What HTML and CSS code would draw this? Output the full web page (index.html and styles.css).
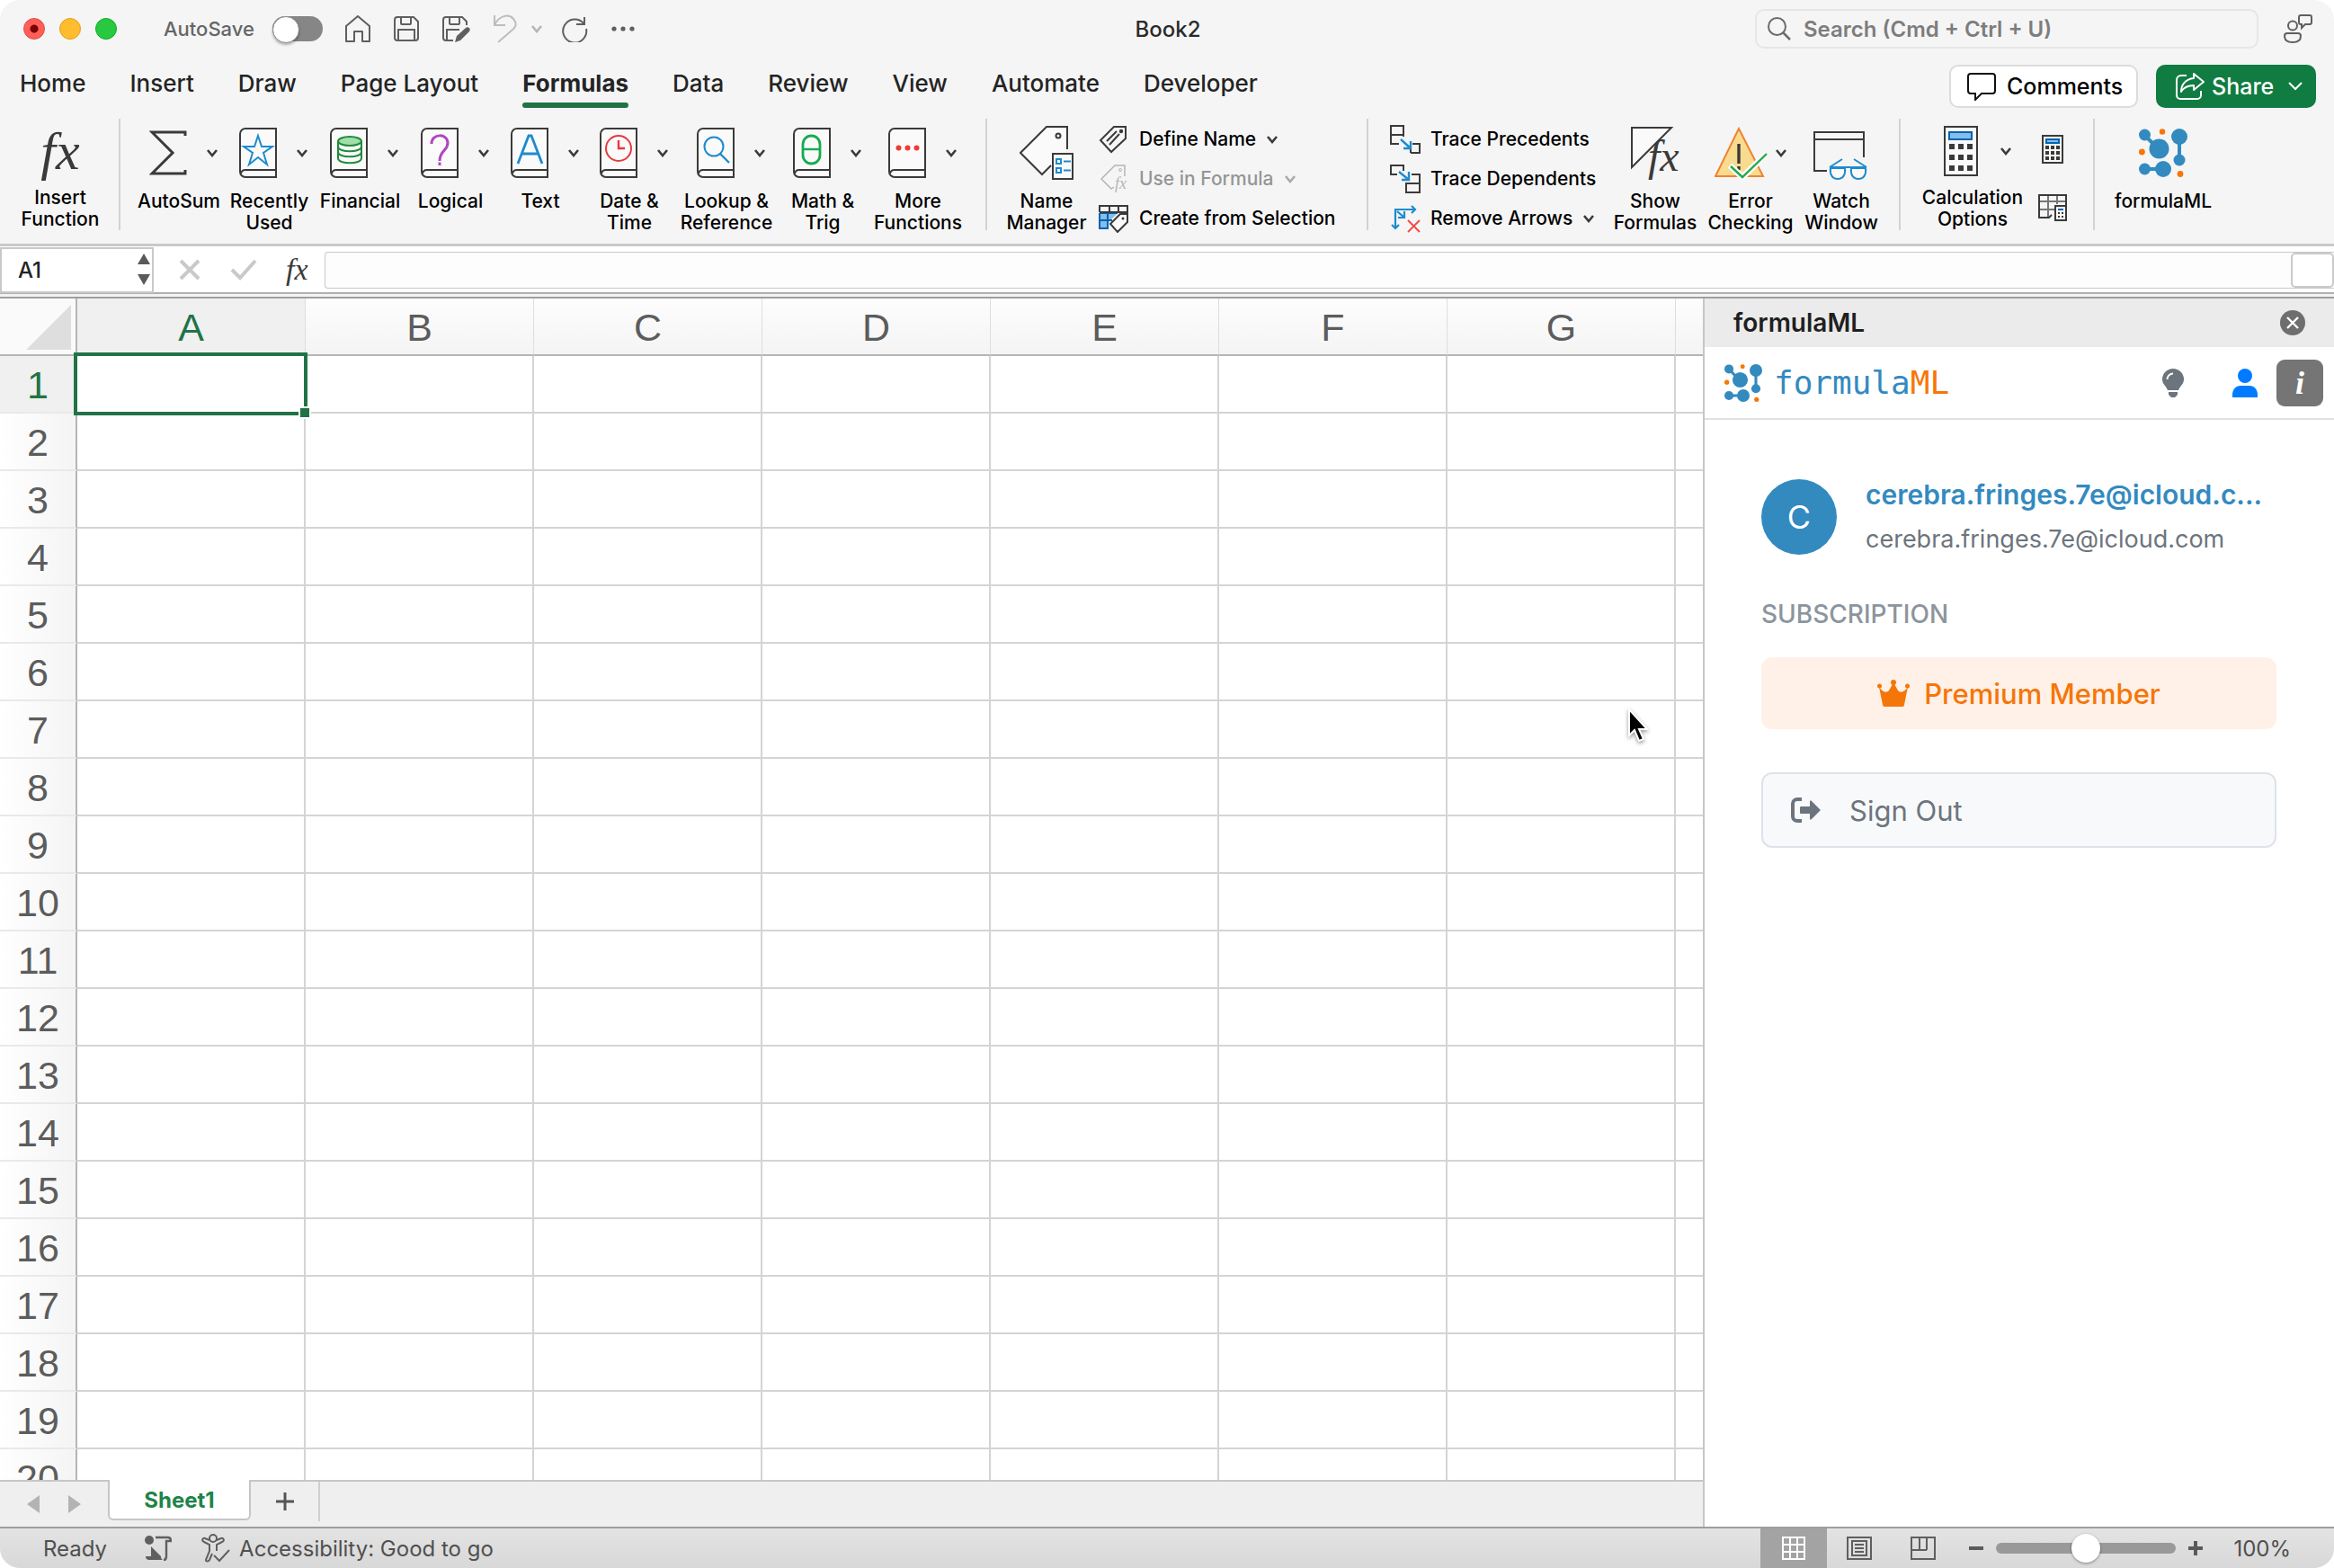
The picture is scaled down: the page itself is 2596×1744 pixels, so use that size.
FILE: index.html
```html
<!DOCTYPE html>
<html lang="en">
<head>
<meta charset="utf-8">
<title>Book2</title>
<link rel="stylesheet" href="styles.css">
</head>
<body>
<svg class="defs" aria-hidden="true">
  <symbol id="chev" viewBox="0 0 14 10"><path d="M2 2l5 6 5-6" fill="none" stroke="currentColor" stroke-width="2.6"/></symbol>
  <symbol id="book" viewBox="0 0 42 56"><path d="M41 1H7a6 6 0 0 0-6 6v42a6 6 0 0 0 6 6h34z" fill="#fafafa" stroke="#3b3a39" stroke-width="2"/><path d="M41 47H7a5 5 0 0 0-5 4" fill="none" stroke="#3b3a39" stroke-width="2"/></symbol>
  <symbol id="logo" viewBox="0 0 54 54"><g fill="#338abf" stroke="#338abf"><path d="M6 7l16 16M45 9v26M6 45h20" stroke-width="4"/><g stroke="none"><circle cx="6.500" cy="7" r="6.500"/><circle cx="22.500" cy="22.500" r="11"/><circle cx="45" cy="9" r="9"/><circle cx="45" cy="35" r="6.500"/><circle cx="6.500" cy="45" r="6.500"/><circle cx="27" cy="45" r="9"/></g></g><g fill="#f77605"><circle cx="26" cy="3.500" r="3.200"/><circle cx="3.400" cy="26" r="3.400"/><circle cx="46" cy="50.500" r="3.400"/></g></symbol>
</svg>
<div class="window">
  <header class="titlebar">
    <div class="title-left">
      <div class="lights"><button class="light light-close" aria-label="Close"></button><button class="light light-min" aria-label="Minimize"></button><button class="light light-max" aria-label="Zoom"></button></div>
      <label class="autosave">AutoSave <input type="checkbox" class="switch"></label>
      <div class="quick">
        <button aria-label="Home"><svg width="28" height="30" viewBox="0 0 28 30"><path d="M1 29V12L14 1l13 11v17h-8V18h-9v11z" fill="none" stroke="#5f5f5f" stroke-width="2" stroke-linejoin="round"/></svg></button>
        <button aria-label="Save"><svg width="28" height="28" viewBox="0 0 28 28"><path d="M4 1h18l5 5v18a3 3 0 0 1-3 3H4a3 3 0 0 1-3-3V4a3 3 0 0 1 3-3zM8 1v7a1 1 0 0 0 1 1h9a1 1 0 0 0 1-1V1M5 27V15h18v12" fill="none" stroke="#5f5f5f" stroke-width="2"/></svg></button>
        <button aria-label="Save As"><svg width="32" height="32" viewBox="0 0 32 32"><path d="M12 29H4a3 3 0 0 1-3-3V6a3 3 0 0 1 3-3h18l5 5v4M8 3v7a1 1 0 0 0 1 1h9a1 1 0 0 0 1-1V3M5 29V17h14" fill="none" stroke="#5f5f5f" stroke-width="2"/><path d="M14 31l2-7 10-9c3-2 6 1 4 4l-10 10z" fill="#5f5f5f"/></svg></button>
        <button class="undo" aria-label="Undo"><svg width="28" height="32" viewBox="0 0 28 32"><path d="M2 1v11h12M2 12C7 1 18-1 23 5s2 10-2 13L6 31" fill="none" stroke="#bdbdbd" stroke-width="2"/></svg><svg class="chev" width="14" height="10"><use href="#chev"/></svg></button>
        <button aria-label="Redo"><svg width="30" height="30" viewBox="0 0 30 30"><path d="M26 2v8h-9M25.500 9.500A13 13 0 1 0 28 15" fill="none" stroke="#5f5f5f" stroke-width="2"/></svg></button>
        <button aria-label="More"><svg width="26" height="6" viewBox="0 0 26 6" fill="#5f5f5f"><circle cx="3" cy="3" r="2.600"/><circle cx="13" cy="3" r="2.600"/><circle cx="23" cy="3" r="2.600"/></svg></button>
      </div>
    </div>
    <h1 class="doc">Book2</h1>
    <div class="title-right">
      <label class="search"><svg width="26" height="26" viewBox="0 0 26 26"><circle cx="10.500" cy="10.500" r="9.500" fill="none" stroke="#6b6b6b" stroke-width="2"/><path d="M17 17l8 8" stroke="#6b6b6b" stroke-width="2.500"/></svg><input type="text" aria-label="Search" placeholder="Search (Cmd + Ctrl + U)"></label>
      <button aria-label="Presence"><svg width="32" height="32" viewBox="0 0 32 32" fill="none" stroke="#5f5f5f" stroke-width="2"><circle cx="10" cy="12.500" r="5"/><path d="M4 21h12a3 3 0 0 1 3 3c0 5-4 7-9 7s-9-2-9-7a3 3 0 0 1 3-3zM19 1h10a2 2 0 0 1 2 2v6a2 2 0 0 1-2 2h-5l-4 4v-4h-1a2 2 0 0 1-2-2V3a2 2 0 0 1 2-2z"/></svg></button>
    </div>
  </header>
  <div class="tabrow">
    <nav class="tabs">
      <a href="#">Home</a><a href="#">Insert</a><a href="#">Draw</a><a href="#">Page Layout</a><a href="#" class="on">Formulas</a><a href="#">Data</a><a href="#">Review</a><a href="#">View</a><a href="#">Automate</a><a href="#">Developer</a>
    </nav>
    <div class="actions">
      <button class="comments"><svg width="32" height="32" viewBox="0 0 32 32"><path d="M4 2h24a3 3 0 0 1 3 3v16a3 3 0 0 1-3 3H16l-7 7v-7H4a3 3 0 0 1-3-3V5a3 3 0 0 1 3-3z" fill="none" stroke="#111" stroke-width="2"/></svg>Comments</button>
      <button class="share"><svg width="32" height="32" viewBox="0 0 32 32" fill="none" stroke="#fff" stroke-width="2"><path d="M12 4H6a5 5 0 0 0-5 5v17a4 4 0 0 0 4 4h19a4 4 0 0 0 4-4v-5"/><path d="M20 2l11 9-11 9v-5C13 15 9 17 6 22c0-8 5-14 14-15z" stroke-linejoin="round"/></svg>Share<svg class="sharechev" width="16" height="10" viewBox="0 0 16 10"><path d="M1 1l7 7 7-7" fill="none" stroke="#fff" stroke-width="2"/></svg></button>
    </div>
  </div>
  <div class="ribbon">
    <section class="group g-insert">
      <button class="big"><span class="pic"><span class="fx">fx</span></span><span>Insert<br>Function</span></button>
    </section>
    <section class="group g-lib">
      <button class="big drop"><span class="pic"><svg width="42" height="50" viewBox="0 0 42 50"><path d="M40 6V2H3l23 23L3 48h37v-4" fill="none" stroke="#3b3a39" stroke-width="3"/></svg><svg class="chev" width="14" height="10"><use href="#chev"/></svg></span><span>AutoSum</span></button>
      <button class="big drop"><span class="pic"><svg width="42" height="56"><use href="#book"/><path d="M21 9l4 12h12l-10 7 4 13-10-8-10 8 4-13L5 21h12z" fill="#fafafa" stroke="#1e8bcd" stroke-width="2"/></svg><svg class="chev" width="14" height="10"><use href="#chev"/></svg></span><span>Recently<br>Used</span></button>
      <button class="big drop"><span class="pic"><svg width="42" height="56"><use href="#book"/><g fill="#fafafa" stroke="#218a3c" stroke-width="2"><path d="M9 15v19c0 7 26 7 26 0V15"/><path d="M9 27c0 7 26 7 26 0M9 21c0 7 26 7 26 0" fill="none"/><ellipse cx="22" cy="15" rx="13" ry="5" fill="#a1dfaa"/></g></svg><svg class="chev" width="14" height="10"><use href="#chev"/></svg></span><span>Financial</span></button>
      <button class="big drop"><span class="pic"><svg width="42" height="56"><use href="#book"/><path d="M12 18c0-12 18-12 18-1 0 9-9 8-9 20M21 38.500v3.500" fill="none" stroke="#b146c2" stroke-width="3"/></svg><svg class="chev" width="14" height="10"><use href="#chev"/></svg></span><span>Logical</span></button>
      <button class="big drop"><span class="pic"><svg width="42" height="56"><use href="#book"/><path d="M8 40L20 9h3l12 31M12.500 29h18" fill="none" stroke="#1e8bcd" stroke-width="2.800"/></svg><svg class="chev" width="14" height="10"><use href="#chev"/></svg></span><span>Text</span></button>
      <button class="big drop"><span class="pic"><svg width="42" height="56"><use href="#book"/><circle cx="21" cy="23" r="14" fill="none" stroke="#e8393d" stroke-width="2"/><path d="M21 14v9h7" fill="none" stroke="#e8393d" stroke-width="2.400"/></svg><svg class="chev" width="14" height="10"><use href="#chev"/></svg></span><span>Date &amp;<br>Time</span></button>
      <button class="big drop"><span class="pic"><svg width="42" height="56"><use href="#book"/><circle cx="19" cy="21" r="10.500" fill="none" stroke="#1e8bcd" stroke-width="2"/><path d="M26 29l10 10" stroke="#1e8bcd" stroke-width="2.400"/></svg><svg class="chev" width="14" height="10"><use href="#chev"/></svg></span><span>Lookup &amp;<br>Reference</span></button>
      <button class="big drop"><span class="pic"><svg width="42" height="56"><use href="#book"/><rect x="11" y="9" width="19" height="31" rx="9.500" fill="none" stroke="#17ab50" stroke-width="2.800"/><path d="M11 24h19" stroke="#17ab50" stroke-width="2.400"/></svg><svg class="chev" width="14" height="10"><use href="#chev"/></svg></span><span>Math &amp;<br>Trig</span></button>
      <button class="big drop"><span class="pic"><svg width="42" height="56"><use href="#book"/><g fill="#f03a37"><circle cx="11.500" cy="22.500" r="3"/><circle cx="21.500" cy="22.500" r="3"/><circle cx="31.500" cy="22.500" r="3"/></g></svg><svg class="chev" width="14" height="10"><use href="#chev"/></svg></span><span>More<br>Functions</span></button>
    </section>
    <section class="group g-names">
      <button class="big"><span class="pic"><svg width="60" height="60" viewBox="0 0 60 60"><path d="M53 26V1H30L1 30l24 24 10-10" fill="#fafafa" stroke="#3b3a39" stroke-width="2"/><circle cx="43" cy="11" r="2.500" fill="none" stroke="#3b3a39" stroke-width="2"/><path d="M37 31h22v28H37z" fill="#fafafa" stroke="#3b3a39" stroke-width="2"/><path d="M41 37h5v5h-5zM41 47h5v5h-5zM49 39.500h8M49 49.500h8" fill="none" stroke="#1e8bcd" stroke-width="2"/></svg></span><span>Name<br>Manager</span></button>
      <div class="stack">
        <button class="cmd"><svg width="34" height="32" viewBox="0 0 34 32"><path d="M30 2H17L2 17l12 13L30 15zM9 18L20 7M12 22L23 10" fill="none" stroke="#3b3a39" stroke-width="2"/><circle cx="25" cy="7" r="2.200" fill="#3b3a39"/></svg>Define Name<svg class="chev" width="14" height="10"><use href="#chev"/></svg></button>
        <button class="cmd dim" disabled><svg width="34" height="32" viewBox="0 0 34 32"><path d="M29 13V1H18L3 16l11 11 3-2" fill="none" stroke="#b5b5b5" stroke-width="1.500"/><circle cx="24" cy="6" r="1.500" fill="none" stroke="#b5b5b5"/><text x="18" y="27" class="minifx">fx</text></svg>Use in Formula<svg class="chev" width="14" height="10"><use href="#chev"/></svg></button>
        <button class="cmd"><svg width="34" height="32" viewBox="0 0 34 32"><path d="M1 10h20L10 21v7H1z" fill="#83beec"/><path d="M1 10v17h10M1 18h14M10 10v16M1 10h20" fill="none" stroke="#0063b1" stroke-width="2"/><path d="M1 9V2h31v8M12 2v7M22 2v7M1 9h31" fill="none" stroke="#3b3a39" stroke-width="2"/><path d="M32 11h-8L13 22l8 9 11-11z" fill="#fafafa" stroke="#3b3a39" stroke-width="2"/><circle cx="27" cy="16" r="1.500" fill="#3b3a39"/></svg>Create from Selection</button>
      </div>
    </section>
    <section class="group g-audit">
      <div class="stack">
        <button class="cmd"><svg width="34" height="32" viewBox="0 0 34 32"><path d="M10 21H1V1h14v12M1 11h14M23 31h10V21h-8M23 27v4" fill="none" stroke="#3b3a39" stroke-width="2"/><path d="M12 16l11 10M23 18v8h-8" fill="none" stroke="#1e8bcd" stroke-width="2.400"/></svg>Trace Precedents</button>
        <button class="cmd"><svg width="34" height="32" viewBox="0 0 34 32"><path d="M8 11H1V1h14v6M18 21h15v10H18zM24 11h9v10" fill="none" stroke="#3b3a39" stroke-width="2"/><path d="M10 8l11 9M21 8v9h-8" fill="none" stroke="#1e8bcd" stroke-width="2.400"/></svg>Trace Dependents</button>
        <button class="cmd"><svg width="34" height="32" viewBox="0 0 34 32"><path d="M6 27V6h22M24 2l4 4-4 4M2 23l4 4 4-4M8 8l8 7M16 8v7h-7" fill="none" stroke="#1e8bcd" stroke-width="2.200"/><path d="M20 18l13 13M33 18L20 31" stroke="#f04b4b" stroke-width="2"/></svg>Remove Arrows<svg class="chev" width="14" height="10"><use href="#chev"/></svg></button>
      </div>
      <button class="big w-show"><span class="pic"><svg width="56" height="60" viewBox="0 0 56 60"><path d="M46 2H2v44z" fill="#fafafa" stroke="#3b3a39" stroke-width="2"/><text x="20" y="50" class="showfx">fx</text></svg></span><span>Show<br>Formulas</span></button>
      <button class="big w-err"><span class="pic"><svg width="60" height="60" viewBox="0 0 60 60"><path d="M27 3l27 53H1z" fill="#f8db8f" stroke="#ee8432" stroke-width="2"/><path d="M27 20v22M27 45v4" stroke="#3b3a39" stroke-width="3.400"/><path d="M17 44l14 13 27-26" fill="none" stroke="#fafafa" stroke-width="7"/><path d="M18 45l13 12 27-26" fill="none" stroke="#22a94f" stroke-width="2.400"/></svg><svg class="chev" width="14" height="10"><use href="#chev"/></svg></span><span>Error<br>Checking</span></button>
      <button class="big w-watch"><span class="pic"><svg width="62" height="60" viewBox="0 0 62 60"><path d="M15 50H1V7h55v28M1 15h55" fill="none" stroke="#3b3a39" stroke-width="2"/><path d="M18 46h41M18 46l14-9M59 46l-14-9" fill="none" stroke="#1e8bcd" stroke-width="2"/><path d="M19 47h16c1 7-2 12-8 12s-9-5-8-12zM42 47h16c1 7-2 12-8 12s-9-5-8-12z" fill="#fafafa" stroke="#1e8bcd" stroke-width="2"/></svg></span><span>Watch<br>Window</span></button>
    </section>
    <section class="group g-calc">
      <button class="big"><span class="pic"><svg width="38" height="56" viewBox="0 0 38 56"><path d="M1 1h36v54H1z" fill="#fafafa" stroke="#3b3a39" stroke-width="2"/><path d="M6 7h25v8H6z" fill="#83beec" stroke="#0063b1" stroke-width="2"/><path d="M6 23h26M6 35h26M6 47h26" stroke="#3b3a39" stroke-width="6" stroke-dasharray="6 4"/></svg><svg class="chev" width="14" height="10"><use href="#chev"/></svg></span><span>Calculation<br>Options</span></button>
      <div class="minis">
        <button aria-label="Calculate Now"><svg width="24" height="32" viewBox="0 0 24 32"><path d="M1 1h22v30H1z" fill="#fafafa" stroke="#3b3a39" stroke-width="2"/><path d="M5 5h14v4H5z" fill="#83beec" stroke="#0063b1" stroke-width="2"/><path d="M4 14h16M4 20h16M4 26h16" stroke="#3b3a39" stroke-width="4" stroke-dasharray="4 2"/></svg></button>
        <button aria-label="Calculate Sheet"><svg width="32" height="30" viewBox="0 0 32 30"><path d="M1 8h30M1 17h17M11 1v25M21 1v10" fill="none" stroke="#777" stroke-width="2"/><path d="M31 12V1H1v25h11l3-3" fill="none" stroke="#3b3a39" stroke-width="2"/><path d="M19 13h12v16H19z" fill="#fafafa" stroke="#3b3a39" stroke-width="2"/><path d="M22 17h6" stroke="#0063b1" stroke-width="2"/><path d="M22 21h6M22 25h6" stroke="#3b3a39" stroke-width="2" stroke-dasharray="2 2"/></svg></button>
      </div>
    </section>
    <section class="group g-addin">
      <button class="big"><span class="pic"><svg width="54" height="54"><use href="#logo"/></svg></span><span>formulaML</span></button>
    </section>
  </div>
  <div class="fbar">
    <div class="namebox"><input type="text" aria-label="Name box" value="A1"><svg width="16" height="36" viewBox="0 0 16 36" fill="#5a5a5a"><path d="M8 0l7 12H1zM8 35L1 23h14z"/></svg></div>
    <div class="fbtns">
      <button aria-label="Cancel"><svg width="26" height="24" viewBox="0 0 26 24"><path d="M3 2l20 20M23 2L3 22" stroke="#c9c9c9" stroke-width="4"/></svg></button>
      <button aria-label="Enter"><svg width="30" height="24" viewBox="0 0 30 24"><path d="M2 12l9 9L28 2" fill="none" stroke="#c9c9c9" stroke-width="4"/></svg></button>
      <button class="fxs">fx</button>
    </div>
    <div class="finput"><input type="text" aria-label="Formula"><button aria-label="Expand formula bar"></button></div>
  </div>
  <main class="body">
    <div class="sheet">
      <div class="cells">
        <table>
          <colgroup><col class="c-num"><col class="c"><col class="c"><col class="c"><col class="c"><col class="c"><col class="c"><col class="c"><col></colgroup>
          <thead><tr><th class="corner"><svg width="52" height="52" viewBox="0 0 52 52"><path d="M51 1v50H1z" fill="#dedede"/></svg></th><th class="on">A</th><th>B</th><th>C</th><th>D</th><th>E</th><th>F</th><th>G</th><th></th></tr></thead>
          <tbody>
            <tr><th class="on">1</th><td class="picked"><div class="sel"></div></td><td></td><td></td><td></td><td></td><td></td><td></td><td></td></tr>
            <tr><th>2</th><td></td><td></td><td></td><td></td><td></td><td></td><td></td><td></td></tr>
            <tr><th>3</th><td></td><td></td><td></td><td></td><td></td><td></td><td></td><td></td></tr>
            <tr><th>4</th><td></td><td></td><td></td><td></td><td></td><td></td><td></td><td></td></tr>
            <tr><th>5</th><td></td><td></td><td></td><td></td><td></td><td></td><td></td><td></td></tr>
            <tr><th>6</th><td></td><td></td><td></td><td></td><td></td><td></td><td></td><td></td></tr>
            <tr><th>7</th><td></td><td></td><td></td><td></td><td></td><td></td><td></td><td></td></tr>
            <tr><th>8</th><td></td><td></td><td></td><td></td><td></td><td></td><td></td><td></td></tr>
            <tr><th>9</th><td></td><td></td><td></td><td></td><td></td><td></td><td></td><td></td></tr>
            <tr><th>10</th><td></td><td></td><td></td><td></td><td></td><td></td><td></td><td></td></tr>
            <tr><th>11</th><td></td><td></td><td></td><td></td><td></td><td></td><td></td><td></td></tr>
            <tr><th>12</th><td></td><td></td><td></td><td></td><td></td><td></td><td></td><td></td></tr>
            <tr><th>13</th><td></td><td></td><td></td><td></td><td></td><td></td><td></td><td></td></tr>
            <tr><th>14</th><td></td><td></td><td></td><td></td><td></td><td></td><td></td><td></td></tr>
            <tr><th>15</th><td></td><td></td><td></td><td></td><td></td><td></td><td></td><td></td></tr>
            <tr><th>16</th><td></td><td></td><td></td><td></td><td></td><td></td><td></td><td></td></tr>
            <tr><th>17</th><td></td><td></td><td></td><td></td><td></td><td></td><td></td><td></td></tr>
            <tr><th>18</th><td></td><td></td><td></td><td></td><td></td><td></td><td></td><td></td></tr>
            <tr><th>19</th><td></td><td></td><td></td><td></td><td></td><td></td><td></td><td></td></tr>
            <tr><th>20</th><td></td><td></td><td></td><td></td><td></td><td></td><td></td><td></td></tr>
          </tbody>
        </table>
      </div>
      <div class="sheettabs">
        <div class="arrows"><button aria-label="Previous sheet"><svg width="16" height="22" viewBox="0 0 16 22"><path d="M15 1v20L1 11z" fill="#b3b3b3"/></svg></button><button aria-label="Next sheet"><svg width="16" height="22" viewBox="0 0 16 22"><path d="M1 1v20l14-10z" fill="#b3b3b3"/></svg></button></div>
        <button class="sheettab">Sheet1</button>
        <button class="addsheet" aria-label="Add sheet"><svg width="22" height="22" viewBox="0 0 22 22"><path d="M11 1v20M1 11h20" stroke="#555" stroke-width="3"/></svg></button>
      </div>
    </div>
    <aside class="pane">
      <div class="panehead"><h2>formulaML</h2><button aria-label="Close pane"><svg width="30" height="30" viewBox="0 0 30 30"><circle cx="15" cy="15" r="14" fill="#6e6e6e"/><path d="M9 9l12 12M21 9L9 21" stroke="#fff" stroke-width="2.400"/></svg></button></div>
      <div class="brand">
        <svg width="42" height="42"><use href="#logo"/></svg><span class="word">formula<b>ML</b></span>
        <div class="brandbtns">
          <button aria-label="Tips"><svg width="24" height="32" viewBox="0 0 24 32"><path d="M12 0a12 12 0 0 1 12 12c0 5-4 7-6 12H6C4 19 0 17 0 12A12 12 0 0 1 12 0zM7 26h10v3l-3 3h-4l-3-3z" fill="#6c757d"/><path d="M5.500 12A6.500 6.500 0 0 1 12 5.500" fill="none" stroke="#fff" stroke-width="2"/></svg></button>
          <button aria-label="Account"><svg width="28" height="32" viewBox="0 0 28 32" fill="#007bff"><circle cx="14" cy="8" r="8"/><path d="M0 32v-3c0-6 4-10 9-10h10c5 0 9 4 9 10v3z"/></svg></button>
          <button class="info" aria-label="Info">i</button>
        </div>
      </div>
      <div class="panebody">
        <div class="user"><span class="avatar">C</span><div class="who"><strong>cerebra.fringes.7e@icloud.c...</strong><span>cerebra.fringes.7e@icloud.com</span></div></div>
        <h3>SUBSCRIPTION</h3>
        <div class="premium"><svg width="36" height="30" viewBox="0 0 36 30" fill="#f57608"><path d="M6 28L2 8c4 6 8 7 11 4l5-9 5 9c3 3 7 2 11-4l-4 20c0 1-1 2-2 2H8c-1 0-2-1-2-2z"/><circle cx="18" cy="3" r="3"/><circle cx="2.500" cy="7" r="2.500"/><circle cx="33.500" cy="7" r="2.500"/></svg>Premium Member</div>
        <button class="signout"><svg width="34" height="28" viewBox="0 0 34 28"><path d="M12 2H7a5 5 0 0 0-5 5v14a5 5 0 0 0 5 5h5" fill="none" stroke="#6c757d" stroke-width="4"/><path d="M11 10h10V5c0-2 1-2 2-1l9 9c1 1 1 1 0 2l-9 9c-1 1-2 1-2-1v-5H11c-1 0-1-1-1-1v-6c0-1 1-1 1-1z" fill="#6c757d"/></svg>Sign Out</button>
      </div>
    </aside>
  </main>
  <footer class="status">
    <span class="ready">Ready</span>
    <button class="macro" aria-label="Record macro"><svg width="30" height="28" viewBox="0 0 30 28"><circle cx="5" cy="5" r="5" fill="#5f5f5f"/><path d="M12 2h14c2 0 3 2 3 4h-5v17c0 2-1 4-3 4" fill="none" stroke="#5f5f5f" stroke-width="2.400"/><path d="M7 12v11H1c0 3 2 4 4 4h15c-2-1-2-3-2-4z" fill="#5f5f5f"/></svg></button>
    <button class="access"><svg width="32" height="32" viewBox="0 0 32 32" fill="none" stroke="#5f5f5f" stroke-width="2"><circle cx="13" cy="5" r="4"/><path d="M9 7L4 5c-3-1-4 3-1 4l6 3v7L5 29c0 2 3 2 4 0l3-7M17 7l5-2c3-1 4 3 1 4l-6 3v7M14 24l6 6 11-12"/></svg>Accessibility: Good to go</button>
    <div class="views">
      <button class="on" aria-label="Normal view"><svg width="26" height="26" viewBox="0 0 26 26"><path d="M1 1h24v24H1zM1 9h24M1 17h24M9 1v24M17 1v24" fill="none" stroke="#fff" stroke-width="2"/></svg></button>
      <button aria-label="Page layout view"><svg width="28" height="26" viewBox="0 0 28 26"><path d="M1 1h26v24H1zM6 5h16v16H6zM9 9h10M9 13h10M9 17h10" fill="none" stroke="#5f5f5f" stroke-width="2"/></svg></button>
      <button aria-label="Page break view"><svg width="28" height="26" viewBox="0 0 28 26"><path d="M1 1h26v24H1zM1 15h17M10 1v14M18 1v14" fill="none" stroke="#5f5f5f" stroke-width="2"/></svg></button>
    </div>
    <div class="zoom">
      <button aria-label="Zoom out"><svg width="16" height="16" viewBox="0 0 16 16"><path d="M0 8h16" stroke="#5a5a5a" stroke-width="4"/></svg></button>
      <input type="range" min="0" max="200" value="100" aria-label="Zoom">
      <button aria-label="Zoom in"><svg width="16" height="16" viewBox="0 0 16 16"><path d="M0 8h16M8 0v16" stroke="#5a5a5a" stroke-width="4"/></svg></button>
      <span class="pct">100%</span>
    </div>
  </footer>
  <svg class="cursor" width="24" height="40" viewBox="0 0 24 40"><path d="M2 2v29l6-6 5 12 5-2-5-11h9z" fill="#000" stroke="#fff" stroke-width="2"/></svg>
</div>
</body>
</html>
```
FILE: styles.css
```css
* { box-sizing: border-box; }
html, body { height: 100%; margin: 0; }
body { background: #fff; font-family: Inter, "Liberation Sans", sans-serif; color: #242424; overflow: hidden; }
button, input { font: inherit; color: inherit; border: 0; background: none; padding: 0; margin: 0; outline: 0; }
h1, h2, h3 { margin: 0; }
svg { display: block; flex: none; }
a { color: inherit; text-decoration: none; }
.defs { position: absolute; width: 0; height: 0; }
.window { position: relative; height: 100%; display: flex; flex-direction: column; background: #f5f5f5; border-radius: 22px; overflow: hidden; }
.chev { color: #3b3a39; }

/* title bar */
.titlebar { display: grid; grid-template-columns: 1fr auto 1fr; align-items: center; height: 64px; padding: 0 24px 0 26px; }
.title-left { display: flex; align-items: center; }
.lights { display: flex; gap: 16px; margin-right: 52px; }
.light { width: 24px; height: 24px; border-radius: 50%; }
.light-close { background: radial-gradient(circle, #7a0000 4px, #ff5f57 5px); border: 1px solid #e2463f; }
.light-min { background: #febc2e; border: 1px solid #e1a116; }
.light-max { background: #28c840; border: 1px solid #12ac28; }
.autosave { display: flex; align-items: center; gap: 20px; font-size: 22px; font-weight: 500; color: #666; }
.switch { appearance: none; width: 56px; height: 28px; border-radius: 14px; background: #868686; display: flex; }
.switch::before { content: ""; width: 28px; height: 28px; border-radius: 50%; background: #fff; border: 1px solid #8a8a8a; box-shadow: 0 2px 3px rgba(0,0,0,.3); }
.quick { display: flex; align-items: center; gap: 26px; margin-left: 25px; }
.undo { display: flex; align-items: center; gap: 14px; margin-right: -6px; margin-left: -2px; }
.undo .chev { color: #b5b5b5; }
.doc { font-size: 24px; font-weight: 500; color: #2b2b2b; }
.title-right { display: flex; align-items: center; justify-content: flex-end; gap: 28px; }
.search { display: flex; align-items: center; gap: 14px; width: 560px; height: 44px; padding: 0 12px; border: 2px solid #e6e6e6; border-radius: 10px; }
.search input { flex: 1; font-size: 24px; font-weight: 600; }
.search input::placeholder { color: #7d7d7d; opacity: 1; }

/* ribbon tabs */
.tabrow { display: flex; justify-content: space-between; align-items: center; height: 64px; padding: 0 20px 0 22px; }
.tabs { display: flex; gap: 49px; font-size: 26px; font-weight: 500; line-height: 30px; padding-top: 6px; }
.tabs a { border-bottom: 6px solid transparent; padding-bottom: 6px; position: relative; }
.tabs .on { font-weight: 700; }
.tabs .on::after { content: ""; position: absolute; left: 0; right: 0; bottom: -6px; height: 6px; border-radius: 3px; background: #217346; }
.actions { display: flex; gap: 20px; font-size: 25px; font-weight: 500; }
.comments, .share { display: flex; align-items: center; height: 48px; border-radius: 10px; }
.comments { width: 210px; gap: 12px; padding-left: 18px; background: #fff; border: 2px solid #dcdcdc; color: #000; }
.share { width: 178px; gap: 8px; padding-left: 22px; background: #107c41; color: #fff; }
.sharechev { margin-left: 8px; }

/* ribbon */
.ribbon { display: flex; height: 146px; padding: 4px 0 16px; border-bottom: 3px solid #c9c9c9; color: #000; font-size: 21px; line-height: 24px; }
.group { display: flex; height: 124px; border-right: 2px solid #d2d2d2; }
.group:last-child { border: 0; }
.big { display: flex; flex-direction: column; align-items: center; justify-content: flex-start; font-weight: 500; white-space: nowrap; }
.pic { display: flex; align-items: center; justify-content: center; height: 60px; margin: 8px 0 12px; }
.big .chev { margin-left: 21px; }
.drop .pic { width: 67px; justify-content: flex-start; }
.fx { font: italic 60px/56px "Liberation Serif", serif; color: #3b3a39; }
.g-insert { width: 134px; justify-content: center; padding-left: 2px; }
.g-lib { width: 964px; padding-left: 15px; display: grid; grid-template-columns: 100px 101px 101px 100px 100px 98px 118px 96px 116px; }
.g-names { width: 424px; padding-left: 18px; }
.g-names .big { width: 96px; }
.stack { display: grid; grid-template-rows: repeat(3, 44px); justify-items: start; padding: 1px 0 0 10px; }
.cmd { display: flex; align-items: center; gap: 11px; font-weight: 500; white-space: nowrap; }
.dim { color: #959595; }
.dim .chev { color: #a9a9a9; }
.minifx { font: italic 18px "Liberation Serif", serif; fill: #b5b5b5; }
.showfx { font: italic 48px "Liberation Serif", serif; fill: #3b3a39; }
.g-audit { width: 592px; padding-left: 14px; }
.g-audit .stack { width: 252px; }
.w-show { width: 106px; }
.w-err { width: 106px; }
.w-err .pic { width: 80px; justify-content: flex-start; }
.w-err .big .chev, .w-err .chev { margin-left: 7px; }
.w-watch { width: 96px; }
.g-calc { width: 216px; padding-left: 22px; }
.g-calc .big { width: 116px; }
.g-calc .big .chev { margin-left: 24px; margin-right: -12px; }
.minis { display: flex; flex-direction: column; align-items: center; width: 62px; padding-top: 18px; gap: 34px; }
.g-addin { width: 152px; justify-content: center; }

/* formula bar */
.fbar { display: flex; align-items: center; height: 58px; background: #fff; border-bottom: 2px solid #9e9e9e; box-shadow: inset 0 -3px #f3f3f3, inset 0 -5px #b0b0b0; padding-bottom: 4px; }
.namebox { display: flex; align-items: center; width: 171px; height: 51px; border: 2px solid #c9c9c9; padding: 0 1px 0 18px; }
.namebox input { flex: 1; min-width: 0; font-size: 24px; font-weight: 500; }
.fbtns { display: flex; align-items: center; gap: 32px; width: 190px; padding-left: 27px; }
.fxs { font: italic 34px/40px "Liberation Serif", serif; color: #3b3a39; }
.finput { flex: 1; display: flex; height: 41px; border: 1px solid #c9c9c9; border-right: 0; border-radius: 4px 0 0 4px; background: #fdfdfd; }
.finput input { flex: 1; }
.finput button { width: 48px; border: 2px solid #cacaca; border-radius: 5px; background: #fff; }

/* workbook */
.body { flex: 1; min-height: 0; display: flex; background: #fff; }
.sheet { flex: 1; min-width: 0; display: flex; flex-direction: column; }
.cells { flex: 1; min-height: 0; overflow: hidden; }
table { width: 100%; table-layout: fixed; border-collapse: separate; border-spacing: 0; }
.c-num { width: 86px; }
.c { width: 254px; }
th { padding: 2px 0 0; font: 400 43px/60px "Liberation Sans", sans-serif; color: #5c5c5c; }
thead th { height: 64px; background: linear-gradient(#fdfdfd, #f4f4f4); border-right: 1px solid #dedede; border-bottom: 2px solid #b5b5b5; }
tbody th { height: 64px; background: linear-gradient(90deg, #fff, #f4f4f4); border-right: 2px solid #b5b5b5; border-bottom: 2px solid #e9e9e9; }
thead .corner { border-right: 2px solid #b5b5b5; padding-left: 28px; background: #fafafa; }
th.on { background: #f0f0f0; color: #217346; }
td { padding: 0; border-right: 2px solid #d4d4d4; border-bottom: 2px solid #d4d4d4; }
tr > :last-child { border-right: 0; }
.picked { position: relative; }
.sel { position: absolute; inset: -4px; border: 4px solid #217346; }
.sel::after { content: ""; position: absolute; right: -6px; bottom: -6px; width: 10px; height: 10px; background: #217346; outline: 2px solid #fff; }
.sheettabs { display: flex; height: 52px; background: #efefef; border-top: 2px solid #c6c6c6; }
.arrows { display: flex; align-items: center; gap: 30px; width: 120px; padding-left: 29px; }
.sheettab { width: 159px; height: 45px; margin-top: -2px; padding-top: 2px; background: #fff; border: 2px solid #c6c6c6; border-top: 0; border-radius: 0 0 6px 6px; font-size: 24px; font-weight: 700; color: #1e8449; }
.addsheet { display: flex; align-items: center; justify-content: center; width: 77px; height: 44px; border-right: 2px solid #cfcfcf; }

/* task pane */
.pane { width: 702px; border-left: 2px solid #c6c6c6; background: #fff; }
.panehead { display: flex; align-items: center; justify-content: space-between; height: 54px; padding: 0 31px 0 32px; background: #ebebeb; }
.panehead h2 { font-size: 28px; font-weight: 600; color: #1f1f1f; }
.brand { display: flex; align-items: center; height: 81px; padding: 0 12px 0 22px; border-bottom: 2px solid #dee2e6; }
.word { margin-left: 13px; font: 36px/40px "DejaVu Sans Mono", monospace; color: #338abf; }
.word b { font-weight: 400; color: #f77605; }
.brandbtns { display: flex; align-items: center; margin-left: auto; }
.brandbtns button:first-child { margin-right: 54px; }
.info { width: 52px; height: 52px; margin-left: 21px; border-radius: 9px; background: #757575; color: #fff; font: italic 700 36px/52px "Liberation Serif", serif; }
.panebody { padding: 58px 64px 0 63px; }
.user { display: flex; align-items: center; gap: 32px; }
.avatar { flex: none; width: 84px; height: 84px; border-radius: 50%; background: #338abf; color: #fff; font-size: 36px; line-height: 84px; text-align: center; }
.who { min-width: 0; line-height: 50px; }
.who strong, .who span { display: block; white-space: nowrap; }
.who strong { font-size: 30px; font-weight: 600; color: #338abf; }
.who span { font-size: 27px; color: #6c757d; }
h3 { margin: 40px 0 30px; font-size: 28px; line-height: 36px; font-weight: 500; color: #8c959d; }
.premium { display: flex; align-items: center; justify-content: center; gap: 16px; height: 80px; border-radius: 12px; background: #fff1e7; color: #f57608; font-size: 31px; font-weight: 500; }
.signout { display: flex; align-items: center; gap: 31px; width: 100%; height: 84px; margin-top: 48px; padding-left: 31px; border: 2px solid #dee2e9; border-radius: 12px; background: #f8f9fb; color: #6c757d; font-size: 31px; }

/* status bar */
.status { display: flex; align-items: center; height: 46px; padding: 0 48px; border-top: 2px solid #9e9e9e; background: linear-gradient(#e3e3e3, #d8d8d8); color: #4f4f4f; font-size: 24px; }
.macro { margin-left: 42px; }
.access { display: flex; align-items: center; gap: 10px; margin-left: 33px; }
.views { display: flex; align-self: stretch; margin-left: auto; }
.views button { display: flex; align-items: center; justify-content: center; width: 71px; }
.views .on { width: 74px; background: #a3a3a3; }
.zoom { display: flex; align-items: center; gap: 14px; margin-left: 16px; }
.zoom input { appearance: none; width: 200px; height: 12px; border-radius: 6px; background: #999; }
.zoom input::-webkit-slider-thumb { appearance: none; width: 32px; height: 32px; border-radius: 50%; background: #fff; box-shadow: 0 1px 3px rgba(0,0,0,.4); }
.pct { margin-left: 20px; }

.cursor { position: absolute; left: 1810px; top: 787px; filter: drop-shadow(0 2px 2px rgba(0,0,0,.4)); }
```
